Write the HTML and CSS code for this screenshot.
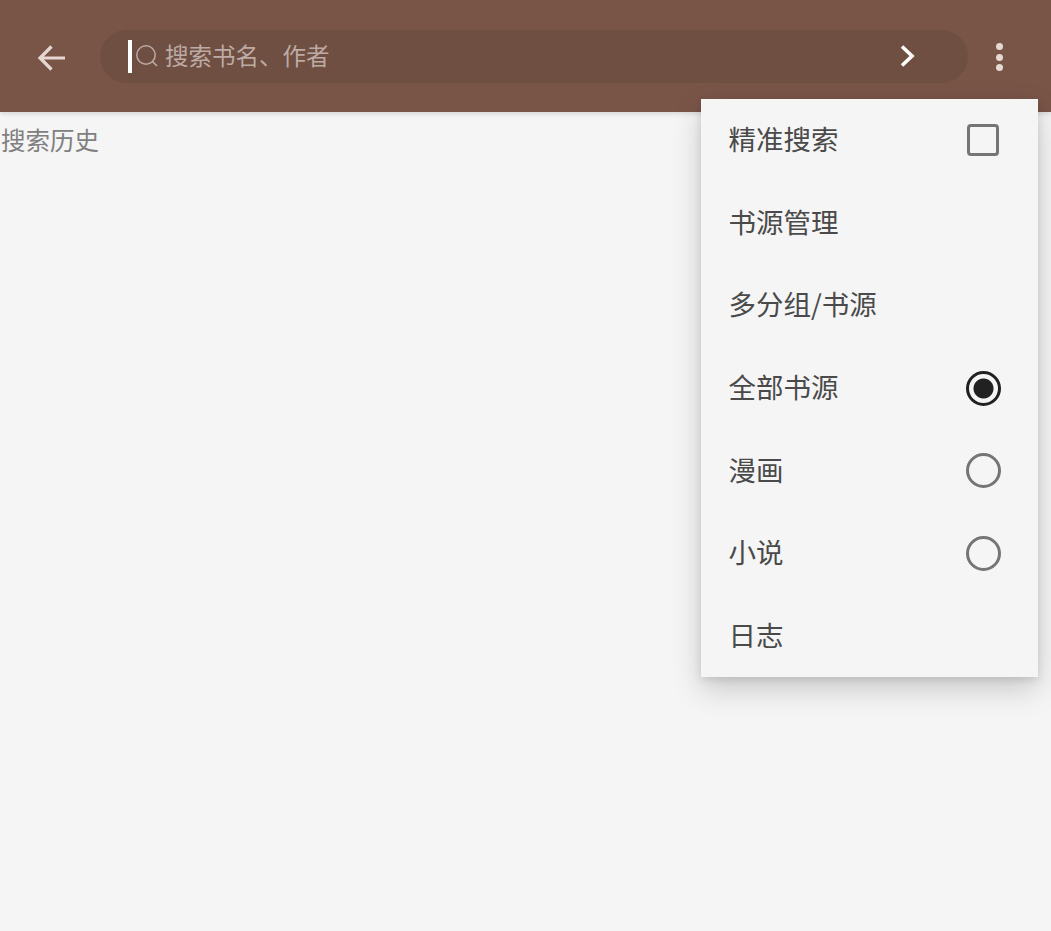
FILE: index.html
```html
<!DOCTYPE html>
<html lang="zh-CN">
<head>
<meta charset="utf-8">
<title>搜索</title>
<link rel="stylesheet" href="styles.css">
</head>
<body>
<header class="toolbar">
  <button class="icon-btn back" aria-label="返回">
    <svg width="34" height="34" viewBox="0 0 34 34"><path d="M30 17H6M16.500 5.500 5 17 16.500 28.500" fill="none" stroke="#e6d6d1" stroke-width="3.200"/></svg>
  </button>
  <div class="search">
    <span class="caret"></span>
    <svg class="lens" width="26" height="26" viewBox="0 0 26 26"><circle cx="12" cy="12" r="9.200" fill="none" stroke="#bcaaa4" stroke-width="1.500"/><path d="M18.600 18.600 23 23" stroke="#bcaaa4" stroke-width="1.500"/></svg>
    <span class="hint">搜索书名、作者</span>
    <svg class="go" width="20" height="26" viewBox="0 0 20 26"><path d="M4 3.500 14 13 4 22.500" fill="none" stroke="#fff" stroke-width="3.600"/></svg>
  </div>
  <button class="icon-btn more" aria-label="更多">
    <span class="dot"></span><span class="dot"></span><span class="dot"></span>
  </button>
</header>
<main class="content">
  <div class="history-title">搜索历史</div>
</main>
<ul class="menu">
  <li class="menu-item"><span class="label">精准搜索</span><span class="check"></span></li>
  <li class="menu-item"><span class="label">书源管理</span></li>
  <li class="menu-item"><span class="label">多分组/书源</span></li>
  <li class="menu-item"><span class="label">全部书源</span><span class="radio on"></span></li>
  <li class="menu-item"><span class="label">漫画</span><span class="radio"></span></li>
  <li class="menu-item"><span class="label">小说</span><span class="radio"></span></li>
  <li class="menu-item"><span class="label">日志</span></li>
</ul>
</body>
</html>
```
FILE: styles.css
```css
* { box-sizing: border-box; }
html, body { height: 100%; }
body {
  margin: 0;
  background: #f5f5f5;
  font-family: "Noto Sans CJK SC", "Roboto", sans-serif;
  overflow: hidden;
}
.toolbar {
  height: 112px;
  background: #795548;
  display: flex;
  align-items: center;
  padding: 3px 0 0 35px;
  box-shadow: 0 2px 5px rgba(0, 0, 0, .12);
  position: relative;
}
.icon-btn {
  background: none;
  border: 0;
  padding: 0;
  display: flex;
}
.back { width: 34px; margin-right: 31px; }
.search {
  width: 868px;
  height: 53px;
  margin-top: -3px;
  border-radius: 27px;
  background: #704f43;
  display: flex;
  align-items: center;
  padding-left: 28px;
}
.caret {
  width: 4px;
  height: 33px;
  background: #fff;
}
.lens { margin: 0 5px 0 2px; }
.hint {
  font-size: 23.500px;
  line-height: 1;
  color: #bcaaa4;
  width: 733px;
}
.more {
  flex-direction: column;
  gap: 3.500px;
  margin-left: 28px;
  margin-top: -1px;
}
.dot {
  width: 7px;
  height: 7px;
  border-radius: 50%;
  background: #e6d8d3;
}
.content { padding: 11px 0 0 1px; }
.history-title {
  font-size: 24.500px;
  line-height: 34px;
  color: #808080;
}
.menu {
  position: absolute;
  left: 701px;
  top: 99px;
  width: 337px;
  height: 578px;
  margin: 0;
  padding: 0;
  list-style: none;
  background: #f5f5f5;
  box-shadow: 0 12px 28px rgba(0, 0, 0, .18), 0 3px 8px rgba(0, 0, 0, .1);
  display: flex;
  flex-direction: column;
}
.menu-item {
  flex: 1;
  display: flex;
  align-items: center;
  justify-content: space-between;
  padding: 0 37.500px 0 27.500px;
  font-size: 27.500px;
  color: #4a4a4a;
}
.label { padding-bottom: 4px; }
.check {
  width: 32px;
  height: 32px;
  margin-right: 1.500px;
  margin-bottom: 1px;
  border: 3.500px solid #757575;
  border-radius: 4px;
}
.radio {
  width: 35px;
  height: 35px;
  border: 3.500px solid #757575;
  border-radius: 50%;
}
.radio.on {
  border-color: #212121;
  background: radial-gradient(circle, #212121 0 9.500px, transparent 10.500px);
}
```
